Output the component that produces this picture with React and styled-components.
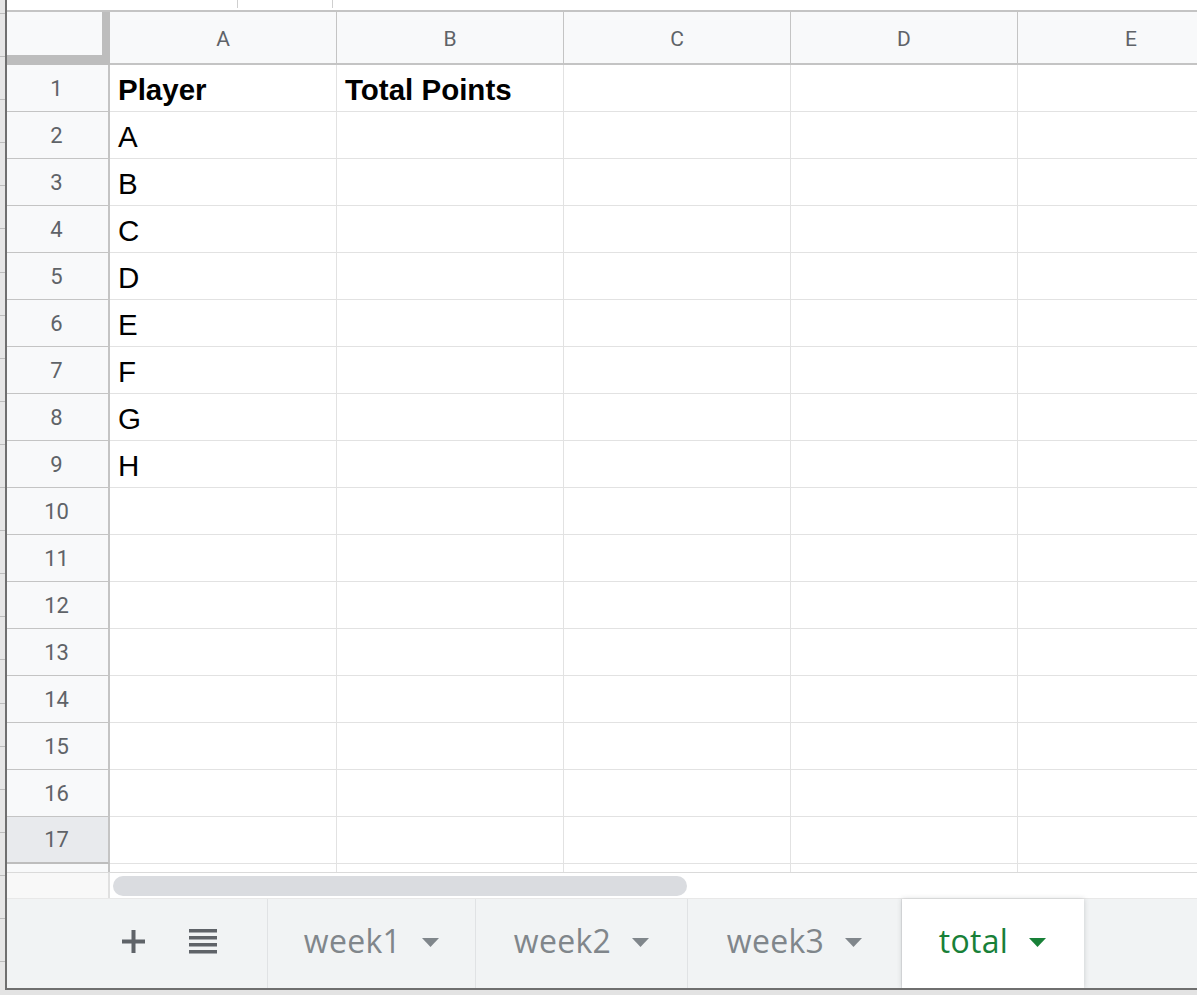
import styled, { createGlobalStyle } from "styled-components";

const GlobalStyle = createGlobalStyle`
  html, body {
    margin: 0;
    padding: 0;
    background: #ffffff;
    overflow: hidden;
  }
  * {
    box-sizing: border-box;
  }
`;

const COLUMNS = ["A", "B", "C", "D", "E"];
const PLAYERS = ["A", "B", "C", "D", "E", "F", "G", "H"];
const ROW_COUNT = 17;
const SHEETS = [
  { name: "week1", width: 208 },
  { name: "week2", width: 212 },
  { name: "week3", width: 214 },
  { name: "total", width: 182 },
];
const ACTIVE_SHEET = "total";

export default function App() {
  const rows = Array.from({ length: ROW_COUNT }, (_, i) => {
    const n = i + 1;
    if (n === 1) return { n, cells: ["Player", "Total Points"], bold: true };
    return { n, cells: [PLAYERS[n - 2] || ""], bold: false };
  });

  return (
    <Page>
      <GlobalStyle />
      <Shell>
        <Backdrop />
        <Frame>
          <TopStrip>
            <TopTab />
          </TopStrip>

          <Sheet>
            <Corner />
            {COLUMNS.map((c) => (
              <ColHeader key={c}>{c}</ColHeader>
            ))}

            {rows.map((row) => (
              <Row key={row.n} row={row} />
            ))}

            <RowHeader $short />
            {COLUMNS.map((c) => (
              <Cell key={c} $short />
            ))}
          </Sheet>

          <ScrollArea>
            <ScrollCorner />
            <ScrollTrack>
              <ScrollThumb />
            </ScrollTrack>
          </ScrollArea>

          <TabBar>
            <Controls>
              <PlusIcon />
              <ListIcon />
            </Controls>
            {SHEETS.map((sheet) => (
              <Tab
                key={sheet.name}
                $width={sheet.width}
                $active={sheet.name === ACTIVE_SHEET}
              >
                {sheet.name}
                <Caret />
              </Tab>
            ))}
            <TabFiller />
          </TabBar>
        </Frame>
      </Shell>
      <BottomStrip />
    </Page>
  );
}

function Row({ row }) {
  return (
    <>
      <RowHeader $selected={row.n === ROW_COUNT}>{row.n}</RowHeader>
      {COLUMNS.map((c, i) => (
        <Cell key={c} $bold={row.bold}>
          {row.cells[i] || ""}
        </Cell>
      ))}
    </>
  );
}

function PlusIcon() {
  return (
    <svg width="23" height="23" viewBox="0 0 23 23">
      <rect x="9.5" y="0" width="4" height="23" fill="#5f6368" />
      <rect x="0" y="9.5" width="23" height="4" fill="#5f6368" />
    </svg>
  );
}

function ListIcon() {
  return (
    <svg width="28" height="25" viewBox="0 0 28 25">
      <rect x="0" y="0" width="28" height="3.5" fill="#5f6368" />
      <rect x="0" y="7" width="28" height="3.5" fill="#5f6368" />
      <rect x="0" y="14" width="28" height="3.5" fill="#5f6368" />
      <rect x="0" y="21" width="28" height="3.5" fill="#5f6368" />
    </svg>
  );
}

function Caret() {
  return (
    <CaretSvg width="17" height="9" viewBox="0 0 17 9">
      <polygon points="0,0 17,0 8.5,9" fill="currentColor" />
    </CaretSvg>
  );
}

const Page = styled.div`
  width: 1197px;
  height: 995px;
  display: flex;
  flex-direction: column;
  overflow: hidden;
`;

const Shell = styled.div`
  display: flex;
  height: 990px;
  flex: none;
`;

const Backdrop = styled.div`
  width: 5px;
  flex: none;
  background-color: #e6e6e6;
  background-image: repeating-linear-gradient(
    to bottom,
    transparent 0,
    transparent 13px,
    #bdbdbd 13px,
    #bdbdbd 14px,
    transparent 14px,
    transparent 43.1px
  );
`;

const Frame = styled.div`
  flex: 1;
  min-width: 0;
  display: flex;
  flex-direction: column;
  border-left: 2px solid #6f6f6f;
  border-bottom: 2px solid #6f6f6f;
  overflow: hidden;
`;

const TopStrip = styled.div`
  height: 10px;
  flex: none;
  background: #ffffff;
  padding-left: 230px;
`;

const TopTab = styled.div`
  width: 96px;
  height: 8px;
  border-left: 1px solid #cfcfcf;
  border-right: 1px solid #cfcfcf;
`;

const Sheet = styled.div`
  display: grid;
  grid-template-columns: 103px repeat(5, 227px);
  grid-template-rows: 53px repeat(17, 47px) 8px;
  border-top: 2px solid #c4c4c4;
  font-family: Roboto, "Liberation Sans", sans-serif;
  flex: none;
`;

const Corner = styled.div`
  background: #f8f9fa;
  border-right: 8px solid #bdbdbd;
  border-bottom: 10px solid #bdbdbd;
`;

const ColHeader = styled.div`
  display: flex;
  align-items: center;
  justify-content: center;
  padding-top: 2px;
  background: #f8f9fa;
  border-right: 1px solid #c4c4c4;
  border-bottom: 2px solid #c4c4c4;
  color: #5f6368;
  font-size: 21px;
`;

const RowHeader = styled.div`
  display: flex;
  align-items: center;
  justify-content: center;
  padding-right: 2px;
  background: ${(p) => (p.$selected ? "#e8eaed" : "#f8f9fa")};
  border-right: 2px solid #c4c4c4;
  border-bottom: ${(p) => (p.$short ? "none" : p.$selected ? "2px solid #bdbdbd" : "1px solid #c4c4c4")};
  color: #5f6368;
  font-size: 22px;
`;

const Cell = styled.div`
  display: flex;
  align-items: center;
  padding: 4px 0 0 8px;
  background: #ffffff;
  border-right: 1px solid #e2e2e2;
  border-bottom: ${(p) => (p.$short ? "none" : "1px solid #e2e2e2")};
  font-family: "Liberation Sans", Arial, sans-serif;
  font-size: 29.5px;
  font-weight: ${(p) => (p.$bold ? 700 : 400)};
  color: #000000;
  white-space: nowrap;
`;

const ScrollArea = styled.div`
  display: flex;
  height: 27px;
  flex: none;
  border-top: 1px solid #dadada;
  border-bottom: 1px solid #e8e8e8;
`;

const ScrollCorner = styled.div`
  width: 103px;
  flex: none;
  background: #f8f8f8;
  border-right: 2px solid #e0e0e0;
`;

const ScrollTrack = styled.div`
  flex: 1;
  background: #ffffff;
  padding: 3px 0 0 3px;
`;

const ScrollThumb = styled.div`
  width: 574px;
  height: 20px;
  border-radius: 10px;
  background: #dadce0;
`;

const TabBar = styled.div`
  flex: 1;
  display: flex;
  align-items: stretch;
  background: #f1f3f4;
  font-family: "Open Sans", Roboto, sans-serif;
`;

const Controls = styled.div`
  width: 261px;
  flex: none;
  display: flex;
  align-items: center;
  gap: 44px;
  padding: 0 0 4px 115px;
  border-right: 1px solid #e0e2e4;
`;

const Tab = styled.div`
  flex: none;
  width: ${(p) => p.$width}px;
  display: flex;
  align-items: center;
  justify-content: center;
  gap: 21px;
  padding-bottom: 6px;
  font-size: 32px;
  letter-spacing: 0.3px;
  color: ${(p) => (p.$active ? "#188038" : "#80868b")};
  background: ${(p) => (p.$active ? "#ffffff" : "transparent")};
  border-right: 1px solid ${(p) => (p.$active ? "transparent" : "#e0e2e4")};
  box-shadow: ${(p) => (p.$active ? "0 0 5px rgba(60, 64, 67, 0.22)" : "none")};
  position: ${(p) => (p.$active ? "relative" : "static")};
`;

const CaretSvg = styled.svg`
  margin-top: 4px;
  flex: none;
`;

const TabFiller = styled.div`
  flex: 1;
`;

const BottomStrip = styled.div`
  flex: 1;
  background: #e3e3e3;
`;
